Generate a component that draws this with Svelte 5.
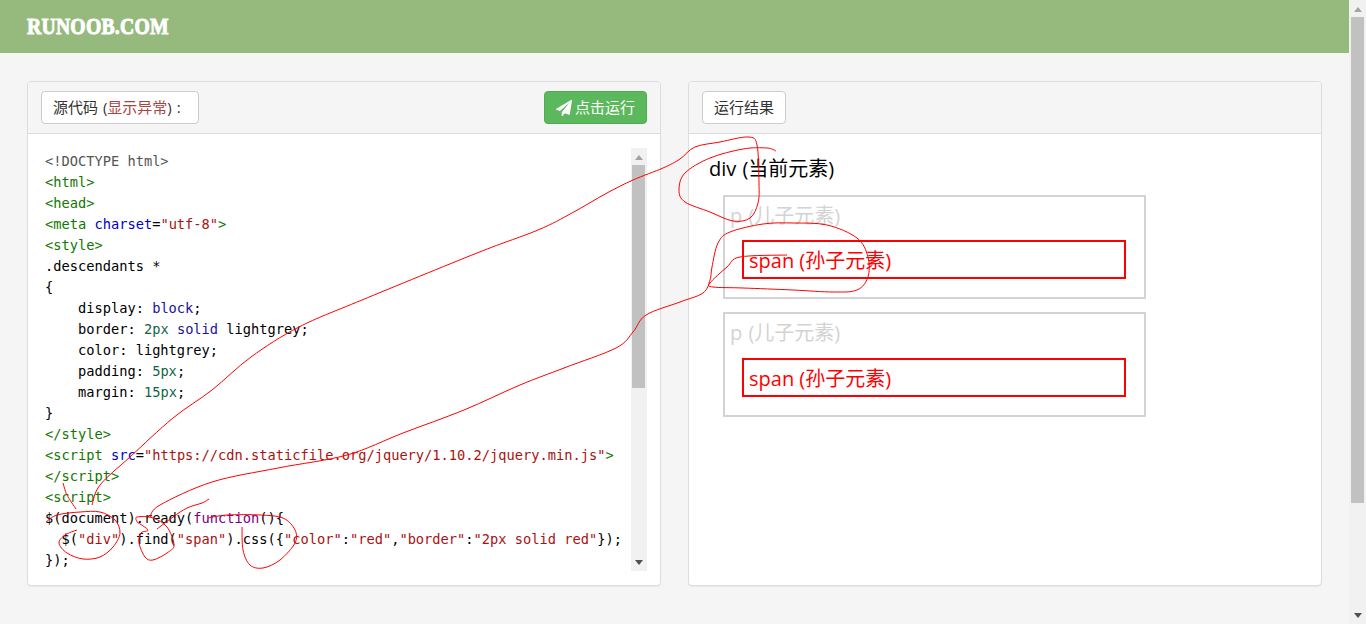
<script lang="ts">
	type Token = [string, string];

	const sp = (n: number): Token => ['', ' '.repeat(n)];

	const codeLines: Token[][] = [
		[['meta', '<!DOCTYPE html>']],
		[['tag', '<html>']],
		[['tag', '<head>']],
		[['tag', '<meta'], ['', ' '], ['attr', 'charset'], ['', '='], ['str', '"utf-8"'], ['tag', '>']],
		[['tag', '<style>']],
		[['', '.descendants *']],
		[['', '{']],
		[sp(4), ['', 'display: '], ['atom', 'block'], ['', ';']],
		[sp(4), ['', 'border: '], ['num', '2px'], ['', ' '], ['atom', 'solid'], ['', ' lightgrey;']],
		[sp(4), ['', 'color: lightgrey;']],
		[sp(4), ['', 'padding: '], ['num', '5px'], ['', ';']],
		[sp(4), ['', 'margin: '], ['num', '15px'], ['', ';']],
		[['', '}']],
		[['tag', '</style>']],
		[['tag', '<script'], ['', ' '], ['attr', 'src'], ['', '='], ['str', '"https://cdn.staticfile.org/jquery/1.10.2/jquery.min.js"'], ['tag', '>']],
		[['tag', '</' + 'script>']],
		[['tag', '<script>']],
		[['', '$(document).ready('], ['kw', 'function'], ['', '(){']],
		[sp(2), ['', '$('], ['str', '"div"'], ['', ').find('], ['str', '"span"'], ['', ').css({'], ['str', '"color"'], ['', ':'], ['str', '"red"'], ['', ','], ['str', '"border"'], ['', ':'], ['str', '"2px solid red"'], ['', '});']],
		[['', '});']]
	];

	// pen strokes drawn over the page
	const strokes: number[][][] = [
		[[92,505],[100,485],[130,457],[173,418],[212,390],[251,357],[299,327],[362,300],[477,253],[538,230],[572,213],[607,193],[633,180],[663,168],[680,159],[695,147],[720,142],[748,137],[757,145],[759,183],[758,203],[750,218],[733,221],[710,212],[685,202],[679,190],[685,173],[710,158],[743,149],[767,148],[776,151]],
		[[150,517],[160,505],[212,482],[278,468],[347,455],[403,433],[464,410],[520,385],[564,368],[616,348],[633,332],[646,315],[680,302],[703,293],[710,280],[712,267],[718,243],[730,232],[763,224],[793,223],[827,225],[857,238],[868,257],[868,277],[857,290],[833,292],[793,290],[743,288],[713,287],[710,283],[727,267],[740,257],[787,255]],
		[[63,483],[67,495],[76,509]],
		[[46,522],[57,515],[80,512],[100,512],[115,520],[120,533],[113,547],[100,557],[83,559],[67,553],[59,543],[65,535],[77,530]],
		[[137,522],[137,517],[153,518],[167,527],[174,545],[167,553],[153,560],[145,557],[139,543],[141,533],[148,530],[137,522]],
		[[157,529],[173,517],[187,508],[202,503],[209,499]],
		[[242,527],[243,550],[250,565],[263,568],[280,560],[295,543],[295,530],[283,518],[260,515],[227,515],[208,518]]
	];

	const smooth = (pts: number[][]) => {
		let d = `M${pts[0][0]} ${pts[0][1]}`;
		for (let i = 0; i < pts.length - 1; i++) {
			const p0 = pts[i - 1] ?? pts[i];
			const p1 = pts[i];
			const p2 = pts[i + 1];
			const p3 = pts[i + 2] ?? p2;
			const c1x = p1[0] + (p2[0] - p0[0]) / 6;
			const c1y = p1[1] + (p2[1] - p0[1]) / 6;
			const c2x = p2[0] - (p3[0] - p1[0]) / 6;
			const c2y = p2[1] - (p3[1] - p1[1]) / 6;
			d += ` C${c1x.toFixed(1)} ${c1y.toFixed(1)} ${c2x.toFixed(1)} ${c2y.toFixed(1)} ${p2[0]} ${p2[1]}`;
		}
		return d;
	};
</script>

<div class="page">
	<div class="main">
		<header class="topbar">
			<span class="logo">RUNOOB.COM</span>
		</header>

		<div class="panels">
			<section class="panel">
				<div class="panelHead">
					<span class="label sourceLabel">源代码 (<span class="danger">显示异常</span>) :</span>
					<span class="runButton">
						<svg class="plane" viewBox="0 0 1792 1792" aria-hidden="true">
							<path d="M1764 11q33 24 27 64l-256 1536q-5 29-32 45-14 8-31 8-11 0-24-5l-453-185-242 295q-18 23-49 23-13 0-22-4-19-7-30.5-23.5t-11.5-36.5v-349l864-1059-1069 925-395-162q-37-14-40-55-2-40 32-59l1664-960q15-9 32-9 20 0 36 11z" />
						</svg>
						点击运行
					</span>
				</div>
				<div class="panelBody">
					<div class="editor">
						<pre class="code">{#each codeLines as line}<div class="line">{#each line as token}<span class={token[0]}>{token[1]}</span>{/each}</div>{/each}</pre>
						<div class="miniBar">
							<span class="arrowUp"></span>
							<span class="miniThumb"></span>
							<span class="arrowDown"></span>
						</div>
					</div>
				</div>
			</section>

			<section class="panel">
				<div class="panelHead">
					<span class="label">运行结果</span>
				</div>
				<div class="result">
					<div class="current">div (当前元素)</div>
					<div class="child">
						p (儿子元素)
						<span class="grand">span (孙子元素)</span>
					</div>
					<div class="child">
						p (儿子元素)
						<span class="grand">span (孙子元素)</span>
					</div>
				</div>
			</section>
		</div>
	</div>

	<div class="pageBar">
		<span class="arrowUp light"></span>
		<span class="pageThumb"></span>
		<span class="arrowDown dark"></span>
	</div>

	<svg class="ink" width="1366" height="624" aria-hidden="true">
		{#each strokes as pts}
			<path d={smooth(pts)} />
		{/each}
	</svg>
</div>

<style>
	:global(body) {
		background: #f5f5f5;
		overflow: hidden;
	}

	.page {
		position: relative;
		display: flex;
		height: 624px;
		overflow: hidden;
		font-family: 'Open Sans', 'Noto Sans CJK SC', sans-serif;
		font-size: 15px;
		color: #333;
	}

	.main {
		flex: 1;
		min-width: 0;
	}

	.topbar {
		display: flex;
		align-items: center;
		height: 53px;
		padding-left: 27px;
		background: #96b97d;
		box-sizing: border-box;
	}

	.logo {
		font-family: 'Liberation Serif', serif;
		font-size: 24px;
		font-weight: 700;
		color: #fff;
		-webkit-text-stroke: 1px #fff;
		letter-spacing: 0.3px;
		transform: scaleX(0.82);
		transform-origin: left center;
	}

	.panels {
		display: grid;
		grid-template-columns: 634px 634px;
		gap: 27px;
		padding: 28px 27px 0;
	}

	.panel {
		display: flex;
		flex-direction: column;
		height: 505px;
		box-sizing: border-box;
		border: 1px solid #ddd;
		border-radius: 4px;
		background: #fff;
		box-shadow: 0 1px 1px rgba(0, 0, 0, 0.05);
	}

	.panelHead {
		display: flex;
		justify-content: space-between;
		align-items: center;
		height: 52px;
		box-sizing: border-box;
		padding: 0 13px;
		background: #f5f5f5;
		border-bottom: 1px solid #ddd;
		border-radius: 3px 3px 0 0;
	}

	.label {
		display: flex;
		align-items: center;
		height: 33px;
		box-sizing: border-box;
		padding: 0 11px 2px;
		background: #fff;
		border: 1px solid #ccc;
		border-radius: 4px;
		white-space: pre;
	}

	.sourceLabel {
		width: 158px;
		word-spacing: 1px;
	}

	.danger {
		color: #a94442;
	}

	.runButton {
		display: flex;
		align-items: center;
		gap: 3px;
		width: 103px;
		height: 33px;
		box-sizing: border-box;
		padding: 0 0 2px 11px;
		background: #5cb85c;
		border: 1px solid #4cae4c;
		border-radius: 4px;
		color: #fff;
	}

	.plane {
		width: 16px;
		height: 16px;
		margin-top: 2px;
		fill: #fff;
	}

	.panelBody {
		flex: 1;
		min-height: 0;
		padding: 14px 13px 14px 1px;
	}

	.editor {
		display: flex;
		height: 423px;
	}

	.code {
		flex: 1;
		min-width: 0;
		margin: 0;
		padding: 3px 0 0 16px;
		overflow: hidden;
		font-family: 'DejaVu Sans Mono', monospace;
		font-size: 13.7px;
		line-height: 21px;
		color: #000;
	}

	.line {
		height: 21px;
		white-space: pre;
	}

	.meta {
		color: #555;
	}

	.tag {
		color: #170;
	}

	.attr {
		color: #00c;
	}

	.str {
		color: #a11;
	}

	.atom {
		color: #219;
	}

	.num {
		color: #164;
	}

	.kw {
		color: #708;
	}

	.miniBar {
		display: flex;
		flex-direction: column;
		align-items: flex-start;
		width: 16px;
		background: #f1f1f1;
	}

	.miniBar .arrowUp,
	.miniBar .arrowDown {
		align-self: center;
	}

	.miniThumb {
		width: 13px;
		height: 223px;
		margin: 5px 0 0 1px;
		background: #c1c1c1;
	}

	.arrowUp,
	.arrowDown {
		width: 0;
		height: 0;
		border-left: 4px solid transparent;
		border-right: 4px solid transparent;
	}

	.arrowUp {
		margin-top: 7px;
		border-bottom: 5px solid #a3a3a3;
	}

	.arrowDown {
		margin-top: auto;
		margin-bottom: 6px;
		border-top: 5px solid #505050;
	}

	.result {
		padding: 22px 0 0 20px;
		color: #000;
		word-spacing: 1px;
	}

	.current {
		height: 39px;
		font-size: 20px;
		line-height: 26px;
	}

	.child {
		display: flow-root;
		width: 423px;
		height: 104.4px;
		box-sizing: border-box;
		margin: 0 0 13px 14px;
		padding: 1px 0 0 5px;
		border: 2px solid #d3d3d3;
		font-size: 20px;
		line-height: 35.4px;
		color: #d3d3d3;
	}

	.grand {
		display: block;
		width: 384px;
		height: 39px;
		box-sizing: border-box;
		margin: 7px 0 0 12px;
		padding: 1px 0 0 5px;
		border: 2px solid #f00;
		line-height: 35px;
		color: #f00;
		word-spacing: 0;
	}

	.pageBar {
		display: flex;
		flex-direction: column;
		align-items: center;
		width: 17px;
		background: #f1f1f1;
	}

	.pageThumb {
		width: 13px;
		height: 486px;
		margin-top: 5px;
		background: #c1c1c1;
	}

	.ink {
		position: absolute;
		top: 0;
		left: 0;
		pointer-events: none;
	}

	.ink path {
		fill: none;
		stroke: #f00;
		stroke-width: 1;
	}
</style>
